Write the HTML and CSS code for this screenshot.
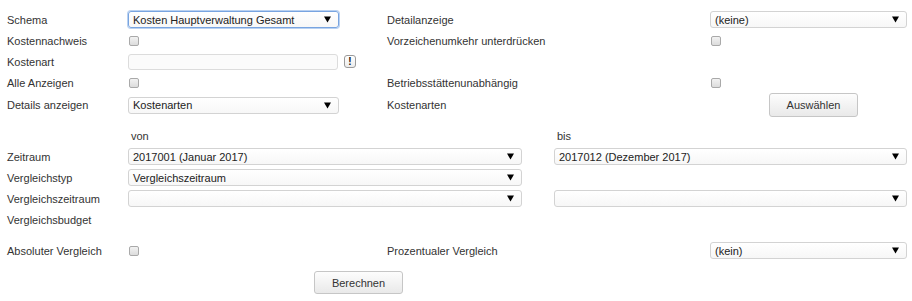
FILE: index.html
```html
<!DOCTYPE html>
<html lang="de">
<head>
<meta charset="utf-8">
<title>Kostenauswertung</title>
<link rel="stylesheet" href="styles.css">
</head>
<body>
<div class="form">
  <div class="grid1">
    <div class="lbl">Schema</div>
    <div class="ctl"><div class="sel focus w211"><span class="val">Kosten Hauptverwaltung Gesamt</span><svg class="arr" width="7" height="7" viewBox="0 0 7 7"><path d="M0 0.5H7L3.5 6.5Z" fill="#000"/></svg></div></div>
    <div class="lbl">Detailanzeige</div>
    <div class="ctl"><div class="sel w197"><span class="val">(keine)</span><svg class="arr" width="7" height="7" viewBox="0 0 7 7"><path d="M0 0.5H7L3.5 6.5Z" fill="#000"/></svg></div></div>

    <div class="lbl">Kostennachweis</div>
    <div class="ctl"><span class="cb"></span></div>
    <div class="lbl">Vorzeichenumkehr unterdrücken</div>
    <div class="ctl"><span class="cb"></span></div>

    <div class="lbl">Kostenart</div>
    <div class="ctl inrow"><div class="inp"></div><span class="bang">!</span></div>
    <div class="lbl"></div>
    <div class="ctl"></div>

    <div class="lbl">Alle Anzeigen</div>
    <div class="ctl"><span class="cb"></span></div>
    <div class="lbl">Betriebsstättenunabhängig</div>
    <div class="ctl"><span class="cb"></span></div>

    <div class="lbl">Details anzeigen</div>
    <div class="ctl"><div class="sel w211"><span class="val">Kostenarten</span><svg class="arr" width="7" height="7" viewBox="0 0 7 7"><path d="M0 0.5H7L3.5 6.5Z" fill="#000"/></svg></div></div>
    <div class="lbl">Kostenarten</div>
    <div class="ctl"><button class="btn btn-sel">Auswählen</button></div>
  </div>

  <div class="grid2">
    <div class="lbl"></div>
    <div class="lbl head">von</div>
    <div class="lbl head">bis</div>

    <div class="lbl">Zeitraum</div>
    <div class="ctl"><div class="sel w394"><span class="val">2017001 (Januar 2017)</span><svg class="arr" width="7" height="7" viewBox="0 0 7 7"><path d="M0 0.5H7L3.5 6.5Z" fill="#000"/></svg></div></div>
    <div class="ctl"><div class="sel w353"><span class="val">2017012 (Dezember 2017)</span><svg class="arr" width="7" height="7" viewBox="0 0 7 7"><path d="M0 0.5H7L3.5 6.5Z" fill="#000"/></svg></div></div>

    <div class="lbl">Vergleichstyp</div>
    <div class="ctl"><div class="sel w394"><span class="val">Vergleichszeitraum</span><svg class="arr" width="7" height="7" viewBox="0 0 7 7"><path d="M0 0.5H7L3.5 6.5Z" fill="#000"/></svg></div></div>
    <div class="ctl"></div>

    <div class="lbl">Vergleichszeitraum</div>
    <div class="ctl"><div class="sel w394"><span class="val"></span><svg class="arr" width="7" height="7" viewBox="0 0 7 7"><path d="M0 0.5H7L3.5 6.5Z" fill="#000"/></svg></div></div>
    <div class="ctl"><div class="sel w353"><span class="val"></span><svg class="arr" width="7" height="7" viewBox="0 0 7 7"><path d="M0 0.5H7L3.5 6.5Z" fill="#000"/></svg></div></div>

    <div class="lbl">Vergleichsbudget</div>
    <div class="ctl"></div>
    <div class="ctl"></div>
  </div>

  <div class="grid1 bottom">
    <div class="lbl">Absoluter Vergleich</div>
    <div class="ctl"><span class="cb"></span></div>
    <div class="lbl">Prozentualer Vergleich</div>
    <div class="ctl"><div class="sel w197"><span class="val">(kein)</span><svg class="arr" width="7" height="7" viewBox="0 0 7 7"><path d="M0 0.5H7L3.5 6.5Z" fill="#000"/></svg></div></div>
  </div>

  <div class="actions">
    <button class="btn btn-calc">Berechnen</button>
  </div>
</div>
</body>
</html>
```

FILE: styles.css
```css
html, body {
  margin: 0;
  padding: 0;
  background: #fff;
}
body {
  font-family: "Liberation Sans", Arial, sans-serif;
  font-size: 11px;
  color: #333;
}
.form {
  padding: 9px 5px 0 7px;
}
.grid1 {
  display: grid;
  grid-template-columns: 121px 259px 323px 197px;
  grid-template-rows: 21px 21px 21px 21px 24px;
  align-items: center;
}
.grid1.bottom {
  grid-template-rows: 21px;
  margin-top: 10px;
}
.grid2 {
  display: grid;
  grid-template-columns: 121px 426px 353px;
  grid-auto-rows: 21px;
  align-items: center;
  margin-top: 8px;
}
.lbl {
  white-space: nowrap;
}
.head {
  padding-left: 3px;
}
.ctl {
  display: flex;
  align-items: center;
}
.sel {
  box-sizing: border-box;
  height: 17px;
  display: flex;
  align-items: center;
  justify-content: space-between;
  padding: 0 7px 0 4px;
  border: 1px solid #d3d3d3;
  border-radius: 3px;
  background: linear-gradient(#ffffff, #f7f7f7);
  color: #222;
}
.sel.focus {
  border-color: #78a4e0;
  box-shadow: 0 0 0 1px #b9d1f1;
}
.w211 { width: 211px; }
.w197 { width: 197px; }
.w394 { width: 394px; }
.w353 { width: 353px; }
.val {
  white-space: nowrap;
}
.arr {
  display: block;
  flex: none;
}
.cb {
  box-sizing: border-box;
  display: block;
  width: 10px;
  height: 10px;
  margin-left: 1px;
  border: 1px solid #a9a9a9;
  border-radius: 2px;
  background: linear-gradient(#f2f2f2, #dcdcdc);
}
.inrow {
  gap: 6px;
}
.inp {
  box-sizing: border-box;
  width: 210px;
  height: 16px;
  border: 1px solid #dcdcdc;
  border-radius: 3px;
  background: #fbfbfb;
}
.bang {
  box-sizing: border-box;
  width: 12px;
  height: 13px;
  border: 1px solid #9a9a9a;
  border-radius: 3px;
  background: linear-gradient(#ffffff, #ececec);
  font-weight: bold;
  font-size: 10px;
  line-height: 11px;
  text-align: center;
  color: #111;
}
.btn {
  box-sizing: border-box;
  font-family: "Liberation Sans", Arial, sans-serif;
  font-size: 11px;
  color: #333;
  border: 1px solid #c6c6c6;
  border-radius: 3px;
  background: linear-gradient(#fdfdfd, #e9e9e9);
  padding: 0;
  width: 89px;
}
.btn-sel {
  height: 24px;
  margin-left: 59px;
}
.actions {
  margin-top: 10px;
  padding-left: 307px;
}
.btn-calc {
  height: 23px;
  display: block;
}
```
